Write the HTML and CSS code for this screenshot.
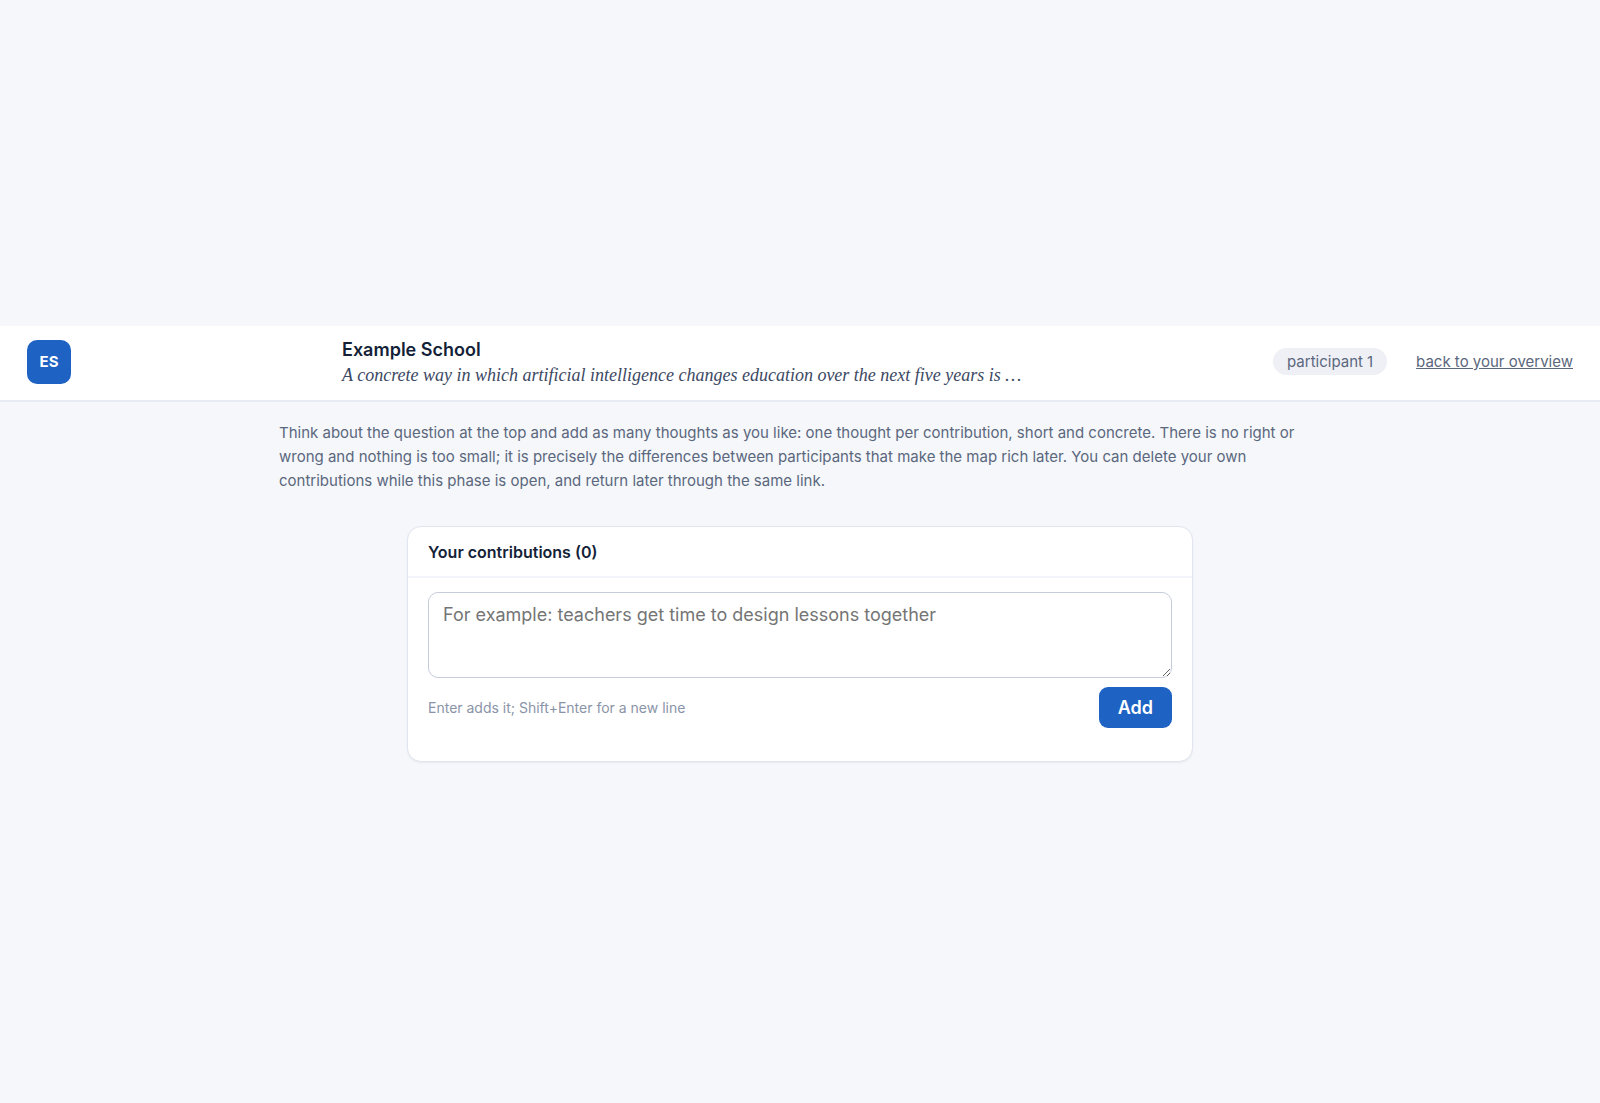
FILE: index.html
```
<!DOCTYPE html>
<html lang="en">
<head>
    <meta charset="UTF-8">
    <meta name="viewport" content="width=device-width, initial-scale=1.0">
    <title>Example School</title>
    <link rel="stylesheet" href="styles.css">
</head>
<body>
    <header class="topbar">
        <div class="logo">ES</div>
        <div class="heading">
            <h1>Example School</h1>
            <p class="question">A concrete way in which artificial intelligence changes education over the next five years is …</p>
        </div>
        <div class="account">
            <span class="badge">participant 1</span>
            <a href="#">back to your overview</a>
        </div>
    </header>
    <main>
        <p class="intro">Think about the question at the top and add as many thoughts as you like: one thought per contribution, short and concrete. There is no right or wrong and nothing is too small; it is precisely the differences between participants that make the map rich later. You can delete your own contributions while this phase is open, and return later through the same link.</p>
        <section class="card">
            <h2><label for="contribution">Your contributions (0)</label></h2>
            <form class="card-body">
                <textarea id="contribution" placeholder="For example: teachers get time to design lessons together"></textarea>
                <div class="actions">
                    <span class="hint">Enter adds it; Shift+Enter for a new line</span>
                    <button type="button">Add</button>
                </div>
            </form>
        </section>
    </main>
</body>
</html>
```
FILE: styles.css
```
* {
    box-sizing: border-box;
}
body {
    display: flex;
    flex-direction: column;
    justify-content: center;
    min-height: 100vh;
    margin: 0;
    padding-bottom: 16px;
    background: #f5f7fb;
    color: #141f38;
    font-family: Inter, sans-serif;
    font-size: 15px;
}
h1, h2, p {
    margin: 0;
}
.topbar {
    display: grid;
    grid-template-columns: 300px minmax(0, 1fr) 300px;
    column-gap: 15px;
    align-items: center;
    padding: 11px 27px 13px;
    background: #fff;
    border-bottom: 2px solid #e8ebf2;
}
.logo {
    display: flex;
    align-items: center;
    justify-content: center;
    width: 44px;
    height: 44px;
    border-radius: 10px;
    background: #1e62c4;
    color: #fff;
    font-weight: 700;
}
h1 {
    font-size: 18px;
    font-weight: 600;
    line-height: 26px;
}
.question {
    color: #3c4963;
    font-family: "Liberation Serif", serif;
    font-size: 18px;
    font-style: italic;
    line-height: 24px;
    white-space: nowrap;
}
.account {
    display: flex;
    align-items: center;
    justify-content: space-between;
    color: #5b677d;
}
.badge {
    padding: 0 14px;
    border-radius: 14px;
    background: #eef0f6;
    line-height: 27px;
}
.account a {
    color: #5b677d;
}
.intro {
    max-width: 1042px;
    margin: 0 auto;
    padding-top: 19px;
    color: #5b677d;
    line-height: 24px;
}
.card {
    max-width: 786px;
    margin: 33px auto 0;
    border: 1px solid #e0e5ee;
    border-radius: 14px;
    background: #fff;
    box-shadow: 0 1px 2px rgba(20, 31, 56, 0.06);
}
h2 {
    padding: 13px 20px 12px;
    border-bottom: 2px solid #f2f4f9;
    font-size: 16px;
    font-weight: 600;
    line-height: 24px;
}
.card-body {
    padding: 14px 20px 33px;
}
textarea {
    display: block;
    width: 100%;
    height: 86px;
    padding: 9px 14px;
    border: 1px solid #c6ccda;
    border-radius: 10px;
    background: #fff;
    font-family: inherit;
    font-size: 18px;
    line-height: 26px;
    resize: vertical;
}
textarea::placeholder {
    color: #757575;
}
.actions {
    display: flex;
    align-items: center;
    justify-content: space-between;
    margin-top: 9px;
}
.hint {
    color: #8a94a8;
    font-size: 14px;
}
button {
    padding: 0 19px;
    border: none;
    border-radius: 9px;
    background: #1e62c4;
    color: #fff;
    font-family: inherit;
    font-size: 18px;
    font-weight: 600;
    line-height: 41px;
    cursor: pointer;
}
```
